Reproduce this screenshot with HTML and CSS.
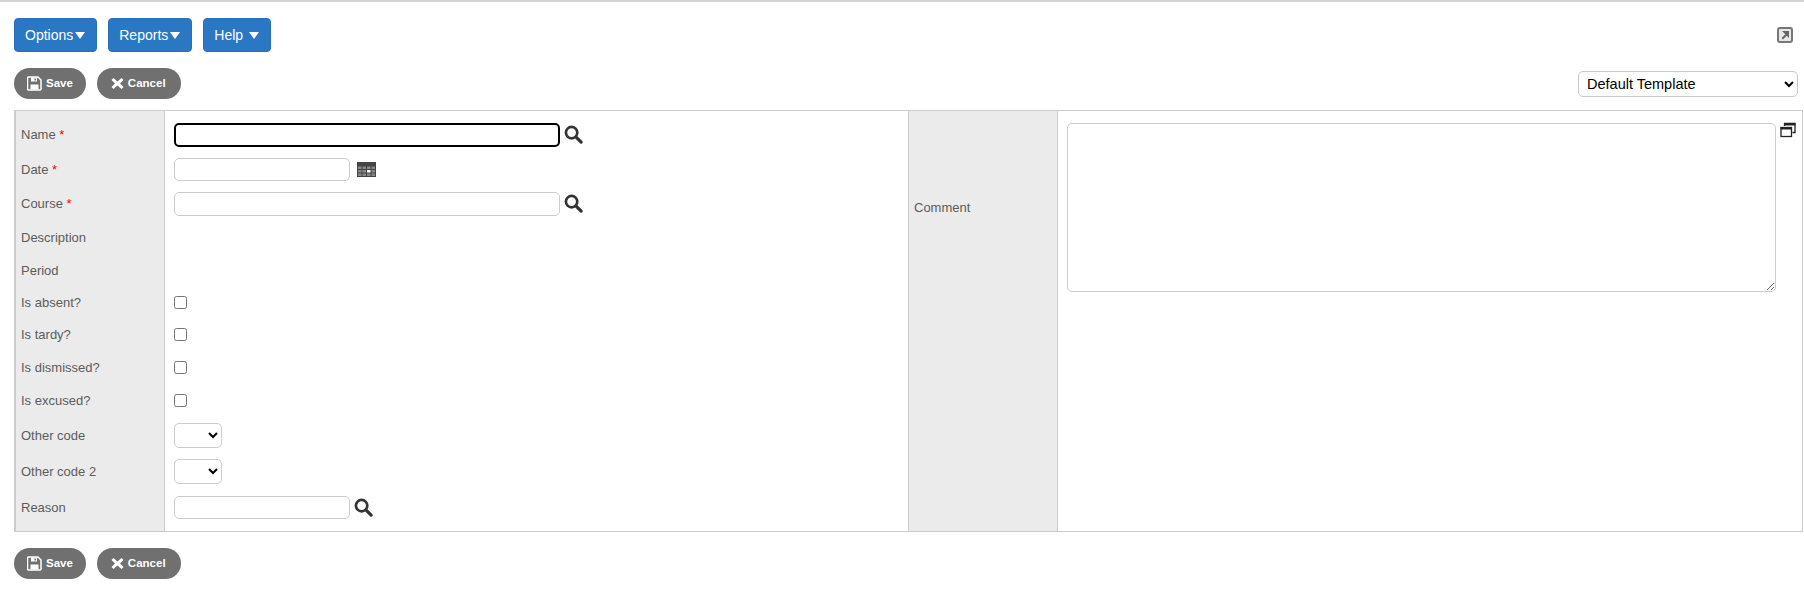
FILE: index.html
```html
<!DOCTYPE html>
<html>
<head>
    <link rel="stylesheet" href="styles.css">
</head>
<body>
    <div class="page">
        <div class="menu-bar">
            <div class="menu-buttons">
                <button class="menu-btn">Options<span class="caret"></span></button>
                <button class="menu-btn">Reports<span class="caret"></span></button>
                <button class="menu-btn help-btn">Help<span class="caret"></span></button>
            </div>
            <svg class="popout-icon" width="16" height="16" viewBox="0 0 16 16">
                <rect x="1" y="1" width="14" height="14" rx="2" fill="#e8e8e8" stroke="#777" stroke-width="2"/>
                <path d="M5 4h7v7l-2.300-2.300-3.700 3.700-1.400-1.400 3.700-3.700z" fill="#666"/>
            </svg>
        </div>

        <div class="action-bar">
            <div class="action-buttons">
                <button class="action-btn">
                    <svg width="15" height="15" viewBox="0 0 15 15"><path d="M1.500 1h9.500l3 3v9a1 1 0 0 1-1 1h-11.500a1 1 0 0 1-1-1v-11a1 1 0 0 1 1-1z" fill="none" stroke="#fff" stroke-width="1.500"/><path d="M4 1.500h6v4h-6zM3.500 8.500h8v5h-8z" fill="#fff"/><path d="M7.500 2.500h1.500v2h-1.500z" fill="#707070"/></svg>
                    <span class="btn-text">Save</span>
                </button>
                <button class="action-btn cancel-btn">
                    <svg width="13" height="13" viewBox="0 0 13 13"><path d="M2.500 1l4 3.500 4-3.500 2 2-3.500 3.500 3.500 3.500-2 2-4-3.500-4 3.500-2-2 3.500-3.500-3.500-3.500z" fill="#fff"/></svg>
                    <span class="btn-text">Cancel</span>
                </button>
            </div>
            <select class="template-select">
                <option>Default Template</option>
            </select>
        </div>

        <table class="form-table">
            <tr class="row-first">
                <td class="label-cell first-col">Name <span class="req">*</span></td>
                <td class="field-cell">
                    <div class="field-wrap">
                        <input type="text" class="text-wide is-focused">
                        <svg class="search-icon" width="19" height="19" viewBox="0 0 20 20"><circle cx="8" cy="8" r="6" fill="none" stroke="#333" stroke-width="2.800"/><path d="M13 13l5 5" stroke="#333" stroke-width="3.400" stroke-linecap="round"/></svg>
                    </div>
                </td>
                <td class="label-cell comment-label" rowspan="12">Comment</td>
                <td class="comment-cell" rowspan="12">
                    <div class="comment-wrap">
                        <textarea class="comment-box"></textarea>
                        <svg class="expand-icon" width="16" height="16" viewBox="0 0 16 16"><path d="M4.500 4v-2.500h10.500v9h-2.500" fill="none" stroke="#222" stroke-width="1.300"/><path d="M4 1h11.500v2.500h-11.500z" fill="#222"/><rect x="1" y="5.500" width="10.500" height="9" fill="#fff" stroke="#222" stroke-width="1.300"/><path d="M.5 5h11.500v2.500h-11.500z" fill="#222"/></svg>
                    </div>
                </td>
            </tr>
            <tr class="row-date">
                <td class="label-cell">Date <span class="req">*</span></td>
                <td class="field-cell">
                    <div class="field-wrap">
                        <input type="text" class="text-short">
                        <svg class="calendar-icon" width="19" height="15" viewBox="0 0 19 15">
                            <rect width="19" height="15" fill="#444"/>
                            <path d="M1 4.500h3.500v2.500h-3.500zM5.500 4.500h3.500v2.500h-3.500zM10 4.500h3.500v2.500h-3.500zM14.500 4.500h3.500v2.500h-3.500zM1 8h3.500v2.500h-3.500zM5.500 8h3.500v2.500h-3.500zM14.500 8h3.500v2.500h-3.500zM1 11.500h3.500v2.500h-3.500zM5.500 11.500h3.500v2.500h-3.500zM10 11.500h3.500v2.500h-3.500zM14.500 11.500h3.500v2.500h-3.500z" fill="#888"/>
                            <rect x="10" y="8" width="3.500" height="2.500" fill="#fff"/>
                        </svg>
                    </div>
                </td>
            </tr>
            <tr class="row-course">
                <td class="label-cell">Course <span class="req">*</span></td>
                <td class="field-cell">
                    <div class="field-wrap">
                        <input type="text" class="text-wide">
                        <svg class="search-icon" width="19" height="19" viewBox="0 0 20 20"><circle cx="8" cy="8" r="6" fill="none" stroke="#333" stroke-width="2.800"/><path d="M13 13l5 5" stroke="#333" stroke-width="3.400" stroke-linecap="round"/></svg>
                    </div>
                </td>
            </tr>
            <tr class="row-text">
                <td class="label-cell">Description</td>
                <td class="field-cell"></td>
            </tr>
            <tr class="row-period">
                <td class="label-cell">Period</td>
                <td class="field-cell"></td>
            </tr>
            <tr class="row-check">
                <td class="label-cell">Is absent?</td>
                <td class="field-cell"><input type="checkbox" class="check"></td>
            </tr>
            <tr class="row-check">
                <td class="label-cell">Is tardy?</td>
                <td class="field-cell"><input type="checkbox" class="check"></td>
            </tr>
            <tr class="row-check">
                <td class="label-cell">Is dismissed?</td>
                <td class="field-cell"><input type="checkbox" class="check"></td>
            </tr>
            <tr class="row-excused">
                <td class="label-cell">Is excused?</td>
                <td class="field-cell"><input type="checkbox" class="check"></td>
            </tr>
            <tr class="row-select">
                <td class="label-cell">Other code</td>
                <td class="field-cell"><select class="code-select"><option></option></select></td>
            </tr>
            <tr class="row-select">
                <td class="label-cell">Other code 2</td>
                <td class="field-cell"><select class="code-select"><option></option></select></td>
            </tr>
            <tr class="row-last">
                <td class="label-cell">Reason</td>
                <td class="field-cell">
                    <div class="field-wrap">
                        <input type="text" class="text-short">
                        <svg class="search-icon" width="19" height="19" viewBox="0 0 20 20"><circle cx="8" cy="8" r="6" fill="none" stroke="#333" stroke-width="2.800"/><path d="M13 13l5 5" stroke="#333" stroke-width="3.400" stroke-linecap="round"/></svg>
                    </div>
                </td>
            </tr>
        </table>

        <div class="action-buttons bottom-actions">
            <button class="action-btn">
                <svg width="15" height="15" viewBox="0 0 15 15"><path d="M1.500 1h9.500l3 3v9a1 1 0 0 1-1 1h-11.500a1 1 0 0 1-1-1v-11a1 1 0 0 1 1-1z" fill="none" stroke="#fff" stroke-width="1.500"/><path d="M4 1.500h6v4h-6zM3.500 8.500h8v5h-8z" fill="#fff"/><path d="M7.500 2.500h1.500v2h-1.500z" fill="#707070"/></svg>
                <span class="btn-text">Save</span>
            </button>
            <button class="action-btn cancel-btn">
                <svg width="13" height="13" viewBox="0 0 13 13"><path d="M2.500 1l4 3.500 4-3.500 2 2-3.500 3.500 3.500 3.500-2 2-4-3.500-4 3.500-2-2 3.500-3.500-3.500-3.500z" fill="#fff"/></svg>
                <span class="btn-text">Cancel</span>
            </button>
        </div>
    </div>
</body>
</html>
```

FILE: styles.css
```css
body {
    margin: 0;
    font-family: "Liberation Sans", Arial, sans-serif;
    font-size: 13px;
    color: #5c5c5c;
    background: #fff;
}
.page {
    border-top: 2px solid #d4d4d4;
    padding: 16px 1px 0 14px;
}
.menu-bar {
    display: flex;
    justify-content: space-between;
    align-items: center;
    padding-right: 10px;
}
.menu-buttons {
    display: flex;
    gap: 11px;
}
.menu-btn {
    height: 34px;
    padding: 0 11px 0 10px;
    border: 1px solid #2a70b8;
    border-radius: 4px;
    background: #2a78c4;
    color: #fff;
    font-family: inherit;
    font-size: 14px;
    display: flex;
    align-items: center;
}
.caret {
    display: inline-block;
    margin-left: 2px;
    border-left: 5px solid transparent;
    border-right: 5px solid transparent;
    border-top: 7px solid #fff;
}
.help-btn .caret {
    margin-left: 6px;
}
.action-bar {
    display: flex;
    justify-content: space-between;
    align-items: center;
    margin-top: 16px;
    padding-right: 5px;
}
.action-buttons {
    display: flex;
    gap: 11px;
}
.action-btn {
    height: 31px;
    padding: 0 13px;
    border: none;
    border-radius: 16px;
    background: #707070;
    color: #fff;
    font-family: inherit;
    font-size: 11.500px;
    font-weight: bold;
    display: flex;
    align-items: center;
    gap: 4px;
}
.btn-text {
    padding-bottom: 2px;
}
.cancel-btn {
    padding: 0 15px 0 14px;
}
.template-select {
    width: 220px;
    height: 26px;
    padding: 0 4px;
    border: 1px solid #c8c8c8;
    border-radius: 5px;
    background: #fff;
    color: #000;
    font-family: inherit;
    font-size: 14.500px;
}
.form-table {
    width: 100%;
    margin-top: 11px;
    border-collapse: collapse;
    border: 1px solid #ccc;
    border-left-width: 2px;
    table-layout: fixed;
}
.form-table td {
    padding: 0;
}
.label-cell {
    padding-left: 5px !important;
    background: #ebebeb;
    border-right: 1px solid #ccc;
    white-space: nowrap;
}
.first-col {
    width: 143px;
}
.field-cell {
    width: 734px;
    padding-left: 9px !important;
    border-right: 1px solid #ccc;
}
.comment-label {
    width: 143px;
    vertical-align: top;
    padding-top: 89px !important;
}
.comment-cell {
    vertical-align: top;
    padding: 12px 6px 0 9px !important;
}
.comment-wrap {
    display: flex;
    align-items: flex-start;
    gap: 4px;
}
.comment-box {
    flex: 1;
    height: 169px;
    box-sizing: border-box;
    border: 1px solid #ccc;
    border-radius: 5px;
    font-family: inherit;
}
.expand-icon {
    flex-shrink: 0;
    margin-top: -1px;
}
.req {
    color: #f00;
}
.field-wrap {
    display: flex;
    align-items: center;
    gap: 4px;
}
.field-wrap input {
    box-sizing: border-box;
    height: 23px;
    border: 1px solid #ccc;
    border-radius: 5px;
    padding: 0 4px;
}
.field-wrap .text-wide {
    width: 386px;
    height: 24px;
}
.text-short {
    width: 176px;
}
.field-wrap .is-focused {
    border: 2px solid #000;
}
.search-icon {
    flex-shrink: 0;
}
.calendar-icon {
    margin-left: 3px;
}
.check {
    display: block;
    margin: 0;
    width: 13px;
    height: 13px;
}
.code-select {
    display: block;
    width: 48px;
    height: 25px;
    border: 1px solid #ccc;
    border-radius: 5px;
    background: #fff;
}
.row-first td:not([rowspan]) {
    height: 35px;
    padding-top: 6px;
}
.row-date {
    height: 34px;
}
.row-course {
    height: 35px;
}
.row-text {
    height: 33px;
}
.row-period {
    height: 32px;
}
.row-check {
    height: 32.500px;
}
.row-excused td {
    height: 32.500px;
    padding-top: 1px;
}
.row-select {
    height: 36px;
}
.row-last td {
    height: 34px;
    padding: 1px 0 7px;
}
.bottom-actions {
    margin-top: 16px;
}
```
